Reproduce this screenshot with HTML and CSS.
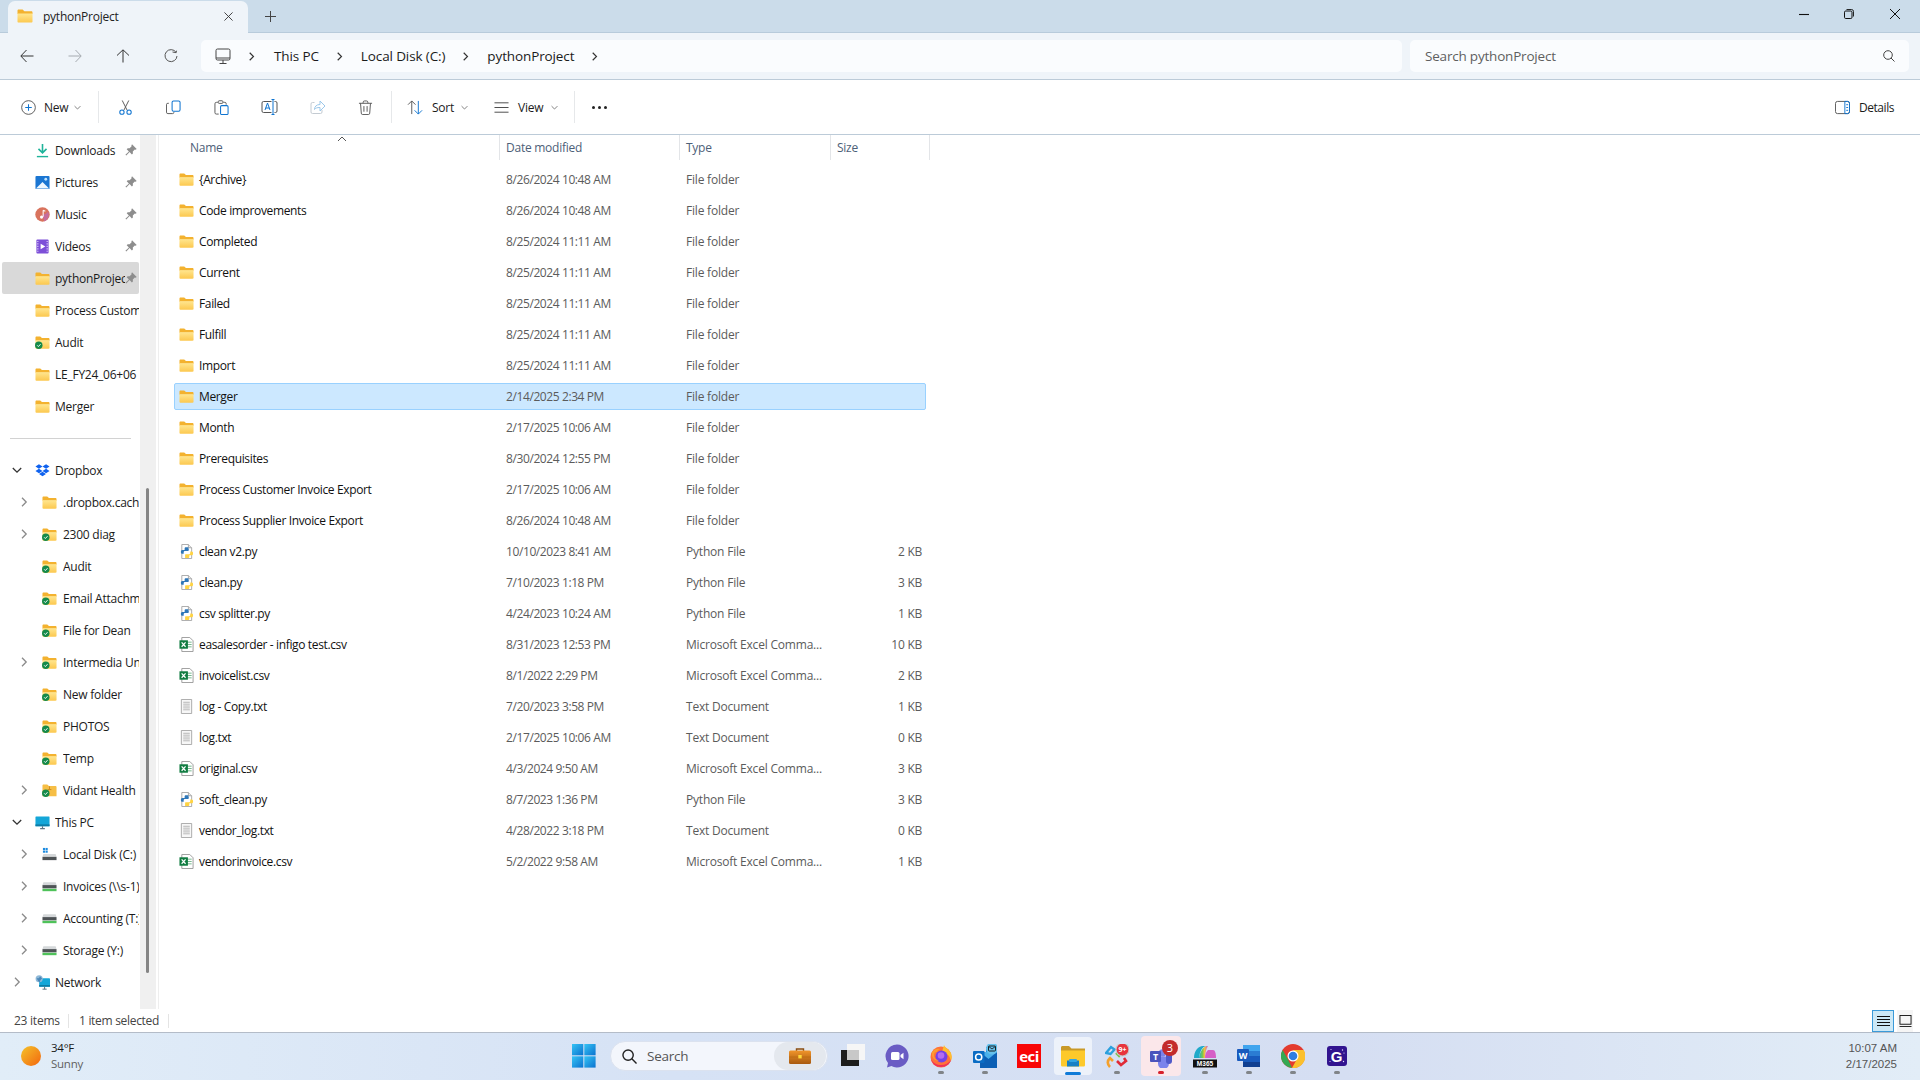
FILE: index.html
```html
<!DOCTYPE html>
<html lang="en">
<head>
<meta charset="utf-8">
<title>pythonProject - File Explorer</title>
<link rel="stylesheet" href="styles.css">
</head>
<body>
<svg class="defs" aria-hidden="true">
  <defs>
    <linearGradient id="fg" x1="0" y1="0" x2="0" y2="1"><stop offset="0" stop-color="#ffe68f"/><stop offset="1" stop-color="#fcc84f"/></linearGradient>
    <linearGradient id="winlogo" x1="0" y1="0" x2="1" y2="1"><stop offset="0" stop-color="#35c4f5"/><stop offset="1" stop-color="#0b72cf"/></linearGradient>
    <linearGradient id="bag" x1="0" y1="0" x2="0" y2="1"><stop offset="0" stop-color="#f0942a"/><stop offset="1" stop-color="#a85a10"/></linearGradient>
    <linearGradient id="sun" x1="0" y1="0" x2="1" y2="1"><stop offset="0" stop-color="#f4c32a"/><stop offset="1" stop-color="#f3660e"/></linearGradient>
    <linearGradient id="copilot" x1="0" y1="0" x2="1" y2="0"><stop offset="0" stop-color="#22b0c8"/><stop offset=".4" stop-color="#7dc84c"/><stop offset=".6" stop-color="#f0c040"/><stop offset="1" stop-color="#d45ec8"/></linearGradient>

    <symbol id="folder" viewBox="0 0 16 14"><path d="M.5 1.600C.5 1 1 .5 1.600.5h4l1.800 1.800h7c.6 0 1.100.5 1.100 1.100V5H.5z" fill="#f3b22f"/><path d="M.5 4.600h15v8c0 .6-.5 1-1 1h-13c-.6 0-1-.4-1-1z" fill="url(#fg)"/></symbol>
    <symbol id="folder-ok" viewBox="0 0 16 14"><path d="M.5 1.600C.5 1 1 .5 1.600.5h4l1.800 1.800h7c.6 0 1.100.5 1.100 1.100V5H.5z" fill="#f3b22f"/><path d="M.5 4.600h15v8c0 .6-.5 1-1 1h-13c-.6 0-1-.4-1-1z" fill="url(#fg)"/><circle cx="4" cy="10" r="4" fill="#158a4a"/><path d="M2.300 10l1.300 1.300 2.300-2.500" fill="none" stroke="#fff" stroke-width="1"/></symbol>
    <symbol id="folder-vid" viewBox="0 0 16 14"><path d="M.5 1.600C.5 1 1 .5 1.600.5h4l1.800 1.800h7c.6 0 1.100.5 1.100 1.100V13H.5z" fill="#f6be45"/><path d="M6 6h4M8 2.500v3" stroke="#c98a1c" stroke-width="1"/><circle cx="4" cy="10" r="4" fill="#158a4a"/><path d="M2.300 10l1.300 1.300 2.300-2.500" fill="none" stroke="#fff" stroke-width="1"/></symbol>
    <symbol id="chev-r" viewBox="0 0 10 10"><path d="M3 .8l4.200 4.200L3 9.200" fill="none" stroke="currentColor" stroke-width="1.300"/></symbol>
    <symbol id="chev-d" viewBox="0 0 10 10"><path d="M.8 3l4.200 4.200L9.200 3" fill="none" stroke="currentColor" stroke-width="1.300"/></symbol>
    <symbol id="pin" viewBox="0 0 12 12"><path d="M7 .3l4.700 4.700-1.100.7-.8-.2-2 2 .1 2-1 1-2.300-2.400L1.300 11.600.4 10.700l3.500-3.300L1.700 5.200l1-1 1.900.1 2-2-.2-.8z" fill="#8d8d8d"/></symbol>
    <symbol id="download" viewBox="0 0 16 16"><path d="M8 1v9M3.700 6.200L8 10.500l4.300-4.300" fill="none" stroke="#1fb39a" stroke-width="1.700"/><path d="M2 14.500h12" stroke="#1fb39a" stroke-width="1.500"/></symbol>
    <symbol id="pictures" viewBox="0 0 16 16"><rect x=".5" y="1" width="15" height="14" rx="1" fill="#1b76d2"/><path d="M1 14.500L8 7.500l7 7z" fill="#eef7ff"/><circle cx="11.500" cy="4.500" r="1.500" fill="#bfe3ff"/></symbol>
    <symbol id="music" viewBox="0 0 16 16"><circle cx="8" cy="8" r="7.700" fill="#d9735d"/><path d="M8 8a7.700 7.700 0 0 0 6-3 7.700 7.700 0 0 1-4 10.400z" fill="#c56d9d"/><path d="M8.700 3.500v7M8.700 3.500l2.300 1" stroke="#fff" stroke-width="1.100" fill="none"/><circle cx="7" cy="10.700" r="1.700" fill="#fff"/></symbol>
    <symbol id="videos" viewBox="0 0 16 16"><rect x="1.500" y=".5" width="13" height="15" rx="1" fill="#7d4fd8"/><path d="M6 5l5 3-5 3z" fill="#fff"/><path d="M3 2v12M13 2v12" stroke="#d7c8f7" stroke-width="1.300" stroke-dasharray="1.300 1.300"/></symbol>
    <symbol id="dropbox" viewBox="0 0 16 16"><path d="M4.200 1.200L8 3.600 4.200 6 .5 3.600zM11.800 1.200L15.500 3.600 11.800 6 8 3.600zM4.200 6L8 8.400l-3.800 2.400L.5 8.400zM11.800 6l3.700 2.400-3.700 2.400L8 8.400zM4.300 11.600L8 9.200l3.700 2.400L8 14.200z" fill="#0f62ef"/></symbol>
    <symbol id="pc" viewBox="0 0 16 16"><rect x=".5" y="1.500" width="15" height="10.500" rx=".6" fill="#14a6d8"/><path d="M.5 10h15v2H.5z" fill="#0d7ca6"/><path d="M5.500 14.500h5M8 12v2.500" stroke="#5f7482" stroke-width="1.200"/></symbol>
    <symbol id="cdrive" viewBox="0 0 16 16"><rect x="1" y="1" width="2.300" height="2.300" fill="#1d8be0"/><rect x="3.800" y="1" width="2.300" height="2.300" fill="#1d8be0"/><rect x="1" y="3.800" width="2.300" height="2.300" fill="#1d8be0"/><rect x="3.800" y="3.800" width="2.300" height="2.300" fill="#1d8be0"/><path d="M1.500 7.500h13l1 3H.5z" fill="#d5d8da"/><rect x=".5" y="10.500" width="15" height="3.500" fill="#4e5356"/></symbol>
    <symbol id="netdrive" viewBox="0 0 16 16"><path d="M1.500 3.500h13l1 3H.5z" fill="#d5d8da"/><rect x=".5" y="6.500" width="15" height="3.500" fill="#4e5356"/><rect x=".5" y="10.500" width="15" height="2.500" fill="#4fc25a"/></symbol>
    <symbol id="network" viewBox="0 0 18 18"><rect x="5" y="4" width="13" height="10" rx=".5" fill="#14a6d8"/><path d="M5 12h13v2H5z" fill="#0d7ca6"/><path d="M9 17h5M11.500 14v3" stroke="#5f7482" stroke-width="1.200"/><circle cx="5" cy="4.500" r="4.300" fill="#8fb9d8"/><path d="M2 3.500c2 1 3 .5 4-2 1 1 2 2 2.500 3-1.500.5-2.500 2-2.500 4-2-.5-3-2.500-4-5z" fill="#4b87b8"/></symbol>
    <symbol id="py" viewBox="0 0 16 16"><path d="M3 .5h7l3.500 3.500v11.500H3z" fill="#fff" stroke="#a8a8a8"/><path d="M10 .5V4h3.500" fill="#e8e8e8" stroke="#a8a8a8"/><path d="M10 3.500H7.500C6.500 3.500 6 4 6 5v1.500H3.500C2.500 6.500 2 7.300 2 8.500S2.500 10.500 3.500 10.500H5V9c0-1 .7-1.500 1.500-1.500H9.500c.7 0 1-.5 1-1z" fill="#2f77b8"/><path d="M6.500 15h3c1 0 1.500-.5 1.500-1.500V12h2.500c1 0 1.500-.8 1.500-2s-.5-2-1.500-2H12v1.500c0 1-.7 1.500-1.500 1.500h-3c-.7 0-1 .5-1 1z" fill="#ffd342"/></symbol>
    <symbol id="xl" viewBox="0 0 16 16"><path d="M3 .5h8.500l3.500 3.500v11.500H3z" fill="#fff" stroke="#9a9a9a"/><path d="M8.500 5.500h5M8.500 8h5M8.500 10.500h5" stroke="#6fb58a"/><rect x=".5" y="3.500" width="9" height="9" fill="#107c41"/><path d="M2.800 5.700l4.200 4.700M7 5.700l-4.200 4.700" stroke="#fff" stroke-width="1.300"/></symbol>
    <symbol id="txt" viewBox="0 0 16 16"><path d="M2.500.5h11v15h-11z" fill="#f7f7f7" stroke="#a8a8a8"/><path d="M4.500 3.500h7M4.500 5.500h7M4.500 7.500h7M4.500 9.500h7M4.500 11.500h7" stroke="#b4b4b4"/></symbol>

    <symbol id="t-new" viewBox="0 0 16 16"><circle cx="8" cy="8" r="7.300" fill="none" stroke="#555" stroke-width="1"/><path d="M8 4.500v7M4.500 8h7" stroke="#0f74d0" stroke-width="1.100"/></symbol>
    <symbol id="t-cut" viewBox="0 0 16 16"><path d="M4.500 .5l5.200 10.300M11.500 .5L6.300 10.800" stroke="#555" stroke-width="1" fill="none"/><circle cx="4.200" cy="13" r="2.300" fill="none" stroke="#0f74d0" stroke-width="1.100"/><circle cx="11.800" cy="13" r="2.300" fill="none" stroke="#0f74d0" stroke-width="1.100"/></symbol>
    <symbol id="t-copy" viewBox="0 0 16 16"><path d="M3 3.500H2a1.500 1.500 0 0 0-1.500 1.500v8A1.500 1.500 0 0 0 2 14.500h5A1.500 1.500 0 0 0 8.500 13" fill="none" stroke="#555"/><rect x="6.500" y="1" width="8.500" height="11" rx="1.500" fill="none" stroke="#0f74d0" stroke-width="1.100"/></symbol>
    <symbol id="t-paste" viewBox="0 0 16 16"><path d="M4 2.500H2.500A1.500 1.500 0 0 0 1 4v9.500A1.500 1.500 0 0 0 2.500 15H5M10 2.500h1.500A1.500 1.500 0 0 1 13 4v1" fill="none" stroke="#555"/><rect x="4.500" y=".8" width="5" height="2.800" rx="1" fill="none" stroke="#555"/><rect x="7" y="6" width="8" height="9.500" rx="1.200" fill="none" stroke="#0f74d0" stroke-width="1.100"/></symbol>
    <symbol id="t-rename" viewBox="0 0 16 16"><path d="M10 2.500H2A1.500 1.500 0 0 0 .5 4v8A1.500 1.500 0 0 0 2 13.500h8M13 2.500h1A1.500 1.500 0 0 1 15.500 4v8a1.500 1.500 0 0 1-1.500 1.500h-1" fill="none" stroke="#555"/><path d="M10 .5h3M10 15.500h3M11.500 .5v15" stroke="#0f74d0" stroke-width="1"/><path d="M3.500 11l2.500-7 2.500 7M4.300 9h3.400" fill="none" stroke="#0f74d0" stroke-width="1"/></symbol>
    <symbol id="t-share" viewBox="0 0 16 16"><path d="M5 3.500H3A1.500 1.500 0 0 0 1.500 5v8A1.500 1.500 0 0 0 3 14.500h8A1.500 1.500 0 0 0 12.500 13v-2" fill="none" stroke="#c4cbd2"/><path d="M5 10.500c0-3 2-5 5.500-5V2l5 5-5 5V8.500c-3 0-4.500.5-5.500 2z" fill="none" stroke="#9cc8ea"/></symbol>
    <symbol id="t-del" viewBox="0 0 16 16"><path d="M1 3.500h14M5.500 3.500V2.500a1.500 1.500 0 0 1 1.500-1.500h2a1.500 1.500 0 0 1 1.500 1.500v1M2.700 3.500l.8 10.500a1.500 1.500 0 0 0 1.500 1.500h6a1.500 1.500 0 0 0 1.500-1.500l.8-10.500M6.300 6.500v6M9.700 6.500v6" fill="none" stroke="#555" stroke-width="1"/></symbol>
    <symbol id="t-sort" viewBox="0 0 18 16"><path d="M5 15V1M1 5l4-4 4 4" fill="none" stroke="#555"/><path d="M12 1v14M8 11l4 4 4-4" fill="none" stroke="#0f74d0"/></symbol>
    <symbol id="t-view" viewBox="0 0 16 16"><path d="M.5 3h15M.5 8h15M.5 13h15" stroke="#444" stroke-width="1"/></symbol>
    <symbol id="t-details" viewBox="0 0 16 14"><rect x=".5" y=".5" width="15" height="13" rx="2.200" fill="none" stroke="#555"/><path d="M10.500.5h3a2 2 0 0 1 2 2v9a2 2 0 0 1-2 2h-3z" fill="none" stroke="#0f74d0"/><path d="M12 4h2M12 7h2M12 10h2" stroke="#0f74d0"/></symbol>
  </defs>
</svg>

<header class="titlebar">
  <div class="tab">
    <svg class="tab-icon"><use href="#folder"/></svg>
    <span class="tab-title">pythonProject</span>
    <svg class="tab-close" viewBox="0 0 10 10"><path d="M.5.500l9 9M9.500.500l-9 9" stroke="#333" stroke-width="1"/></svg>
  </div>
  <svg class="tab-plus" viewBox="0 0 11 11"><path d="M5.500 0v11M0 5.500h11" stroke="#444" stroke-width="1"/></svg>
  <div class="winctl">
    <svg class="wc wc-min" viewBox="0 0 10 10"><path d="M0 5.500h10" stroke="#111" stroke-width="1.100"/></svg>
    <svg class="wc wc-max" viewBox="0 0 10 10"><rect x=".5" y="2" width="7.500" height="7.500" rx="1.200" fill="none" stroke="#111"/><path d="M2.500.5h5A2 2 0 0 1 9.500 2.500v5" fill="none" stroke="#111" stroke-width=".9"/></svg>
    <svg class="wc wc-close" viewBox="0 0 10 10"><path d="M0 0l10 10M10 0L0 10" stroke="#111" stroke-width="1"/></svg>
  </div>
</header>

<nav class="navbar">
  <div class="navbtn"><svg class="nav-ic" viewBox="0 0 14 14"><path d="M13.500 7H1M6.500 1L.8 7l5.700 6" fill="none" stroke="#333"/></svg></div>
  <div class="navbtn"><svg class="nav-ic" viewBox="0 0 14 14"><path d="M.5 7H13M7.500 1l5.700 6-5.700 6" fill="none" stroke="#a5aab0"/></svg></div>
  <div class="navbtn"><svg class="nav-ic" viewBox="0 0 14 14"><path d="M7 13.500V1M1 6.500L7 .8l6 5.700" fill="none" stroke="#333"/></svg></div>
  <div class="navbtn"><svg class="nav-ic" viewBox="0 0 14 14"><path d="M12 3.300A6 6 0 1 0 13 7" fill="none" stroke="#555"/><path d="M8.500 1.500l3.700.7.300-2" transform="translate(0 1.500)" fill="none" stroke="#555"/></svg></div>
  <div class="addr">
    <svg class="addr-pc" viewBox="0 0 16 17"><rect x="1" y="1" width="14" height="11" rx="1.500" fill="none" stroke="#444"/><path d="M1 10h14" stroke="#444"/><path d="M8 12v3M4.500 15.500h7" stroke="#444"/></svg>
    <svg class="crumb-chev first"><use href="#chev-r"/></svg>
    <span>This PC</span>
    <svg class="crumb-chev"><use href="#chev-r"/></svg>
    <span>Local Disk (C:)</span>
    <svg class="crumb-chev"><use href="#chev-r"/></svg>
    <span>pythonProject</span>
    <svg class="crumb-chev"><use href="#chev-r"/></svg>
  </div>
  <div class="searchbox">
    <span>Search pythonProject</span>
    <svg class="search-ic" viewBox="0 0 12 12"><circle cx="5" cy="5" r="4.300" fill="none" stroke="#444"/><path d="M8 8l3.500 3.500" stroke="#444"/></svg>
  </div>
</nav>

<section class="toolbar">
  <div class="tb-lab tb-new"><svg class="t15"><use href="#t-new"/></svg><span>New</span><svg class="tb-drop"><use href="#chev-d"/></svg></div>
  <i class="tb-sep"></i>
  <div class="tb-icons">
    <div class="tb-ic"><svg class="t15"><use href="#t-cut"/></svg></div>
    <div class="tb-ic"><svg class="t15"><use href="#t-copy"/></svg></div>
    <div class="tb-ic"><svg class="t15"><use href="#t-paste"/></svg></div>
    <div class="tb-ic"><svg class="t16"><use href="#t-rename"/></svg></div>
    <div class="tb-ic"><svg class="t16"><use href="#t-share"/></svg></div>
    <div class="tb-ic"><svg class="t15"><use href="#t-del"/></svg></div>
  </div>
  <i class="tb-sep after-icons"></i>
  <div class="tb-lab tb-sort"><svg class="t17"><use href="#t-sort"/></svg><span>Sort</span><svg class="tb-drop"><use href="#chev-d"/></svg></div>
  <div class="tb-lab tb-view"><svg class="t15"><use href="#t-view"/></svg><span>View</span><svg class="tb-drop"><use href="#chev-d"/></svg></div>
  <i class="tb-sep"></i>
  <div class="tb-ic tb-more"><span class="dot"></span><span class="dot"></span><span class="dot"></span></div>
  <div class="tb-details"><svg class="t15"><use href="#t-details"/></svg><span>Details</span></div>
</section>

<div class="content">
  <aside class="sidebar">
    <div class="nav-row"><span class="slot"></span><svg class="ic"><use href="#download"/></svg><span class="lbl">Downloads</span><svg class="pin"><use href="#pin"/></svg></div>
    <div class="nav-row"><span class="slot"></span><svg class="ic"><use href="#pictures"/></svg><span class="lbl">Pictures</span><svg class="pin"><use href="#pin"/></svg></div>
    <div class="nav-row"><span class="slot"></span><svg class="ic"><use href="#music"/></svg><span class="lbl">Music</span><svg class="pin"><use href="#pin"/></svg></div>
    <div class="nav-row"><span class="slot"></span><svg class="ic"><use href="#videos"/></svg><span class="lbl">Videos</span><svg class="pin"><use href="#pin"/></svg></div>
    <div class="nav-row active"><span class="slot"></span><svg class="ic"><use href="#folder"/></svg><span class="lbl">pythonProject</span><svg class="pin"><use href="#pin"/></svg></div>
    <div class="nav-row"><span class="slot"></span><svg class="ic"><use href="#folder"/></svg><span class="lbl">Process Customer Invoice Export</span></div>
    <div class="nav-row"><span class="slot"></span><svg class="ic"><use href="#folder-ok"/></svg><span class="lbl">Audit</span></div>
    <div class="nav-row"><span class="slot"></span><svg class="ic"><use href="#folder"/></svg><span class="lbl">LE_FY24_06+06</span></div>
    <div class="nav-row"><span class="slot"></span><svg class="ic"><use href="#folder"/></svg><span class="lbl">Merger</span></div>
    <hr class="nav-div">
    <div class="nav-row"><span class="slot"><svg class="tw open"><use href="#chev-d"/></svg></span><svg class="ic"><use href="#dropbox"/></svg><span class="lbl">Dropbox</span></div>
    <div class="nav-row sub"><span class="slot"><svg class="tw"><use href="#chev-r"/></svg></span><svg class="ic"><use href="#folder"/></svg><span class="lbl">.dropbox.cache</span></div>
    <div class="nav-row sub"><span class="slot"><svg class="tw"><use href="#chev-r"/></svg></span><svg class="ic"><use href="#folder-ok"/></svg><span class="lbl">2300 diag</span></div>
    <div class="nav-row sub"><span class="slot"></span><svg class="ic"><use href="#folder-ok"/></svg><span class="lbl">Audit</span></div>
    <div class="nav-row sub"><span class="slot"></span><svg class="ic"><use href="#folder-ok"/></svg><span class="lbl">Email Attachments</span></div>
    <div class="nav-row sub"><span class="slot"></span><svg class="ic"><use href="#folder-ok"/></svg><span class="lbl">File for Dean</span></div>
    <div class="nav-row sub"><span class="slot"><svg class="tw"><use href="#chev-r"/></svg></span><svg class="ic"><use href="#folder-ok"/></svg><span class="lbl">Intermedia Unite</span></div>
    <div class="nav-row sub"><span class="slot"></span><svg class="ic"><use href="#folder-ok"/></svg><span class="lbl">New folder</span></div>
    <div class="nav-row sub"><span class="slot"></span><svg class="ic"><use href="#folder-ok"/></svg><span class="lbl">PHOTOS</span></div>
    <div class="nav-row sub"><span class="slot"></span><svg class="ic"><use href="#folder-ok"/></svg><span class="lbl">Temp</span></div>
    <div class="nav-row sub"><span class="slot"><svg class="tw"><use href="#chev-r"/></svg></span><svg class="ic"><use href="#folder-vid"/></svg><span class="lbl">Vidant Health</span></div>
    <div class="nav-row"><span class="slot"><svg class="tw open"><use href="#chev-d"/></svg></span><svg class="ic"><use href="#pc"/></svg><span class="lbl">This PC</span></div>
    <div class="nav-row sub"><span class="slot"><svg class="tw"><use href="#chev-r"/></svg></span><svg class="ic"><use href="#cdrive"/></svg><span class="lbl">Local Disk (C:)</span></div>
    <div class="nav-row sub"><span class="slot"><svg class="tw"><use href="#chev-r"/></svg></span><svg class="ic"><use href="#netdrive"/></svg><span class="lbl">Invoices (\\s-1)</span></div>
    <div class="nav-row sub"><span class="slot"><svg class="tw"><use href="#chev-r"/></svg></span><svg class="ic"><use href="#netdrive"/></svg><span class="lbl">Accounting (T:)</span></div>
    <div class="nav-row sub"><span class="slot"><svg class="tw"><use href="#chev-r"/></svg></span><svg class="ic"><use href="#netdrive"/></svg><span class="lbl">Storage (Y:)</span></div>
    <div class="nav-row"><span class="slot"><svg class="tw"><use href="#chev-r"/></svg></span><svg class="ic"><use href="#network"/></svg><span class="lbl">Network</span></div>
  </aside>
  <div class="scrolltrack"><div class="thumb"></div></div>

  <main class="files">
    <div class="cols head">
      <div class="hcell hname">Name<svg class="sortmark" viewBox="0 0 10 6"><path d="M1 5l4-4 4 4" fill="none" stroke="#555"/></svg></div>
      <div class="hcell">Date modified</div>
      <div class="hcell">Type</div>
      <div class="hcell">Size</div>
    </div>
    <div class="cols row"><div class="name"><svg class="fi"><use href="#folder"/></svg>{Archive}</div><div>8/26/2024 10:48 AM</div><div class="type">File folder</div><div class="size"></div></div>
    <div class="cols row"><div class="name"><svg class="fi"><use href="#folder"/></svg>Code improvements</div><div>8/26/2024 10:48 AM</div><div class="type">File folder</div><div class="size"></div></div>
    <div class="cols row"><div class="name"><svg class="fi"><use href="#folder"/></svg>Completed</div><div>8/25/2024 11:11 AM</div><div class="type">File folder</div><div class="size"></div></div>
    <div class="cols row"><div class="name"><svg class="fi"><use href="#folder"/></svg>Current</div><div>8/25/2024 11:11 AM</div><div class="type">File folder</div><div class="size"></div></div>
    <div class="cols row"><div class="name"><svg class="fi"><use href="#folder"/></svg>Failed</div><div>8/25/2024 11:11 AM</div><div class="type">File folder</div><div class="size"></div></div>
    <div class="cols row"><div class="name"><svg class="fi"><use href="#folder"/></svg>Fulfill</div><div>8/25/2024 11:11 AM</div><div class="type">File folder</div><div class="size"></div></div>
    <div class="cols row"><div class="name"><svg class="fi"><use href="#folder"/></svg>Import</div><div>8/25/2024 11:11 AM</div><div class="type">File folder</div><div class="size"></div></div>
    <div class="cols row selected"><div class="name"><svg class="fi"><use href="#folder"/></svg>Merger</div><div>2/14/2025 2:34 PM</div><div class="type">File folder</div><div class="size"></div></div>
    <div class="cols row"><div class="name"><svg class="fi"><use href="#folder"/></svg>Month</div><div>2/17/2025 10:06 AM</div><div class="type">File folder</div><div class="size"></div></div>
    <div class="cols row"><div class="name"><svg class="fi"><use href="#folder"/></svg>Prerequisites</div><div>8/30/2024 12:55 PM</div><div class="type">File folder</div><div class="size"></div></div>
    <div class="cols row"><div class="name"><svg class="fi"><use href="#folder"/></svg>Process Customer Invoice Export</div><div>2/17/2025 10:06 AM</div><div class="type">File folder</div><div class="size"></div></div>
    <div class="cols row"><div class="name"><svg class="fi"><use href="#folder"/></svg>Process Supplier Invoice Export</div><div>8/26/2024 10:48 AM</div><div class="type">File folder</div><div class="size"></div></div>
    <div class="cols row"><div class="name"><svg class="fi"><use href="#py"/></svg>clean v2.py</div><div>10/10/2023 8:41 AM</div><div class="type">Python File</div><div class="size">2 KB</div></div>
    <div class="cols row"><div class="name"><svg class="fi"><use href="#py"/></svg>clean.py</div><div>7/10/2023 1:18 PM</div><div class="type">Python File</div><div class="size">3 KB</div></div>
    <div class="cols row"><div class="name"><svg class="fi"><use href="#py"/></svg>csv splitter.py</div><div>4/24/2023 10:24 AM</div><div class="type">Python File</div><div class="size">1 KB</div></div>
    <div class="cols row"><div class="name"><svg class="fi"><use href="#xl"/></svg>easalesorder - infigo test.csv</div><div>8/31/2023 12:53 PM</div><div class="type">Microsoft Excel Comma...</div><div class="size">10 KB</div></div>
    <div class="cols row"><div class="name"><svg class="fi"><use href="#xl"/></svg>invoicelist.csv</div><div>8/1/2022 2:29 PM</div><div class="type">Microsoft Excel Comma...</div><div class="size">2 KB</div></div>
    <div class="cols row"><div class="name"><svg class="fi"><use href="#txt"/></svg>log - Copy.txt</div><div>7/20/2023 3:58 PM</div><div class="type">Text Document</div><div class="size">1 KB</div></div>
    <div class="cols row"><div class="name"><svg class="fi"><use href="#txt"/></svg>log.txt</div><div>2/17/2025 10:06 AM</div><div class="type">Text Document</div><div class="size">0 KB</div></div>
    <div class="cols row"><div class="name"><svg class="fi"><use href="#xl"/></svg>original.csv</div><div>4/3/2024 9:50 AM</div><div class="type">Microsoft Excel Comma...</div><div class="size">3 KB</div></div>
    <div class="cols row"><div class="name"><svg class="fi"><use href="#py"/></svg>soft_clean.py</div><div>8/7/2023 1:36 PM</div><div class="type">Python File</div><div class="size">3 KB</div></div>
    <div class="cols row"><div class="name"><svg class="fi"><use href="#txt"/></svg>vendor_log.txt</div><div>4/28/2022 3:18 PM</div><div class="type">Text Document</div><div class="size">0 KB</div></div>
    <div class="cols row"><div class="name"><svg class="fi"><use href="#xl"/></svg>vendorinvoice.csv</div><div>5/2/2022 9:58 AM</div><div class="type">Microsoft Excel Comma...</div><div class="size">1 KB</div></div>
  </main>
</div>

<div class="statusbar">
  <span class="st-count">23 items</span>
  <i class="st-sep"></i>
  <span class="st-sel">1 item selected</span>
  <i class="st-sep"></i>
  <div class="viewmodes">
    <div class="vm active"><svg class="vm-ic" viewBox="0 0 13 11"><path d="M0 1h13M0 4h13M0 7h13M0 10h13" stroke="#111" stroke-width="1"/></svg></div>
    <div class="vm vm-large"><svg class="vm-ic" viewBox="0 0 13 13"><rect x=".5" y=".5" width="12" height="9.500" fill="none" stroke="#111"/><path d="M0 12.500h13" stroke="#111"/></svg></div>
  </div>
</div>

<footer class="taskbar">
  <div class="weather">
    <svg class="sun" viewBox="0 0 20 20"><circle cx="10" cy="10" r="10" fill="url(#sun)"/></svg>
    <div class="w-text"><span class="w-temp">34°F</span><span class="w-cond">Sunny</span></div>
  </div>
  <div class="slot44">
    <svg class="app" viewBox="0 0 24 24"><rect x="0" y="0" width="11.300" height="11.300" fill="url(#winlogo)"/><rect x="12.300" y="0" width="11.300" height="11.300" fill="url(#winlogo)"/><rect x="0" y="12.300" width="11.300" height="11.300" fill="url(#winlogo)"/><rect x="12.300" y="12.300" width="11.300" height="11.300" fill="url(#winlogo)"/></svg>
  </div>
  <div class="tb-search">
    <svg class="ts-ic" viewBox="0 0 16 16"><circle cx="6.500" cy="6.500" r="5.500" fill="none" stroke="#222" stroke-width="1.500"/><path d="M10.500 10.500l5 5" stroke="#222" stroke-width="1.500"/></svg>
    <span class="ts-text">Search</span>
    <div class="ts-bag">
      <svg class="ts-bag-ic" viewBox="0 0 22 16"><path d="M7.500 3V1h7v2" fill="none" stroke="#8a4d12" stroke-width="1.400"/><rect x="0" y="2.500" width="22" height="13.500" rx="1.500" fill="url(#bag)"/><path d="M0 9h22" stroke="#b8680f" stroke-width=".7"/><rect x="9.300" y="7" width="3.400" height="3.400" fill="#ffd83a"/></svg>
    </div>
  </div>
  <div class="slot44">
    <svg class="app" viewBox="0 0 24 24"><rect x="6" y="0" width="18" height="16" fill="#f6f6f6"/><rect x="0" y="6" width="18" height="16" fill="#1d1d1d"/><rect x="6" y="6" width="12" height="10" fill="#c8c8c8"/></svg>
  </div>
  <div class="slot44">
    <svg class="app" viewBox="0 0 24 24"><path d="M12 .5a11.500 11.500 0 1 1-5.600 21.500L2 23.500l1-4.500A11.500 11.500 0 0 1 12 .5z" fill="#6a5cc4"/><rect x="6" y="8" width="8.500" height="8" rx="1.500" fill="#fff"/><path d="M15.500 11l3-2.200v6.400l-3-2.200z" fill="#fff"/></svg>
  </div>
  <div class="slot44">
    <svg class="app" viewBox="0 0 24 24"><circle cx="12" cy="13" r="10.500" fill="#ff7139"/><path d="M15 1c1 3 5 4 7 8 1 3 1 6 0 8-1-5-4-8-9-9z" fill="#ffbd2e"/><circle cx="12.500" cy="12.500" r="6" fill="#7542e5"/><circle cx="12" cy="11.500" r="3.300" fill="#b36cf0"/><path d="M3 8c2-3 5-4 8-3-2 1-3 2-3 3-2 0-3 1-3 3 0 3 2 5 5 5.500-4 1-8-3-7-8.500z" fill="#ff9a2e"/><path d="M2 15c1 5 5 8 10 8 5 0 9-3 10-7-2 3-6 5-10 5-4 0-8-2-10-6z" fill="#f0305a"/></svg>
    <i class="rundot"></i>
  </div>
  <div class="slot44">
    <svg class="app" viewBox="0 0 24 24"><path d="M7 8h17v16H7z" fill="#0b5fb5"/><path d="M7 8l8.500 7L24 8z" fill="#4bb0ea"/><path d="M13 3h9v5h-9z" fill="#1b86d6"/><rect x="0" y="7" width="11.500" height="12" rx="1" fill="#0a6cc4"/><circle cx="5.700" cy="13" r="3.100" fill="none" stroke="#fff" stroke-width="1.500"/><circle cx="19" cy="4.500" r="6" fill="#65c1ec"/><rect x="15.500" y="2" width="7" height="5" rx=".8" fill="#65c1ec" stroke="#111" stroke-width=".9"/><path d="M15.700 2.500L19 5l3.300-2.500" fill="none" stroke="#111" stroke-width=".8"/></svg>
    <i class="rundot"></i>
  </div>
  <div class="slot44">
    <div class="eci">eci</div>
  </div>
  <div class="slot44 current">
    <svg class="app" viewBox="0 0 24 24"><path d="M0 3.500C0 2.500 .7 2 1.500 2h6.500l2.500 2.500H24V8H0z" fill="#c99a28"/><path d="M0 6.500h24V21c0 1-.7 1.500-1.500 1.500h-21C.7 22.500 0 22 0 21z" fill="#fdc92b"/><path d="M6 16.500h12v6H6z" fill="#1880c4"/><rect x="8" y="15" width="8" height="3" rx="1" fill="#33a5e2"/></svg>
    <i class="rundot blue"></i>
  </div>
  <div class="slot44">
    <svg class="app" viewBox="0 0 24 24"><path d="M1 9l5-6 3.500 2.500L5.500 10z" fill="none" stroke="#2ba0dd" stroke-width="2.400"/><path d="M5 23c-3-3-3-6 0-9l3 3" fill="none" stroke="#f5a02a" stroke-width="2.600"/><path d="M12 17l4 4 5-4-2-3" fill="none" stroke="#e02a36" stroke-width="2.600"/><path d="M11 9l3 3 3-4" fill="none" stroke="#7ac24a" stroke-width="2.400"/><circle cx="17.500" cy="5.500" r="6.500" fill="#e8353d" stroke="#c8c8c8" stroke-width="1.200"/><text class="badge-txt" x="17.500" y="8">9+</text></svg>
    <i class="rundot"></i>
  </div>
  <div class="slot44 teams">
    <svg class="app" viewBox="0 0 24 24"><circle cx="13.500" cy="9" r="3.800" fill="#7b83eb"/><path d="M9 12.500h11v7a5 5 0 0 1-11 0z" fill="#7b83eb"/><path d="M17 10h6v7a3 3 0 0 1-6 0z" fill="#5059c9"/><rect x="1" y="7" width="11" height="11" rx="1" fill="#4b53bc"/><text class="teams-t" x="6.500" y="15.500">T</text></svg>
    <span class="teams-badge">3</span>
    <i class="rundot red"></i>
  </div>
  <div class="slot44">
    <svg class="app" viewBox="0 0 24 24"><path d="M1 14C1 7 5 2 10 2h3c-4 1-6 5-7 12z" fill="#1fa9c9"/><path d="M6 14c1-7 4-10 7-12h2c-2 3-3 8-3 12z" fill="url(#copilot)"/><path d="M12 14c0-4 1-6 3-8h5c2 0 3 3 3 8z" fill="#d65fc6"/><rect x="0" y="15.500" width="24" height="8" fill="#111"/><text class="m365" x="12" y="22">M365</text></svg>
    <i class="rundot"></i>
  </div>
  <div class="slot44">
    <svg class="app" viewBox="0 0 24 24"><path d="M6 1h17v22H6z" fill="#2b7cd3"/><path d="M6 1h17v6H6z" fill="#41a5ee"/><path d="M6 12h17v6H6z" fill="#185abd"/><path d="M6 18h17v5H6z" fill="#103f91"/><rect x="0" y="5" width="12" height="12" rx="1" fill="#185abd"/><text class="word-w" x="6" y="14.500">W</text></svg>
    <i class="rundot"></i>
  </div>
  <div class="slot44">
    <svg class="app" viewBox="0 0 24 24"><circle cx="12" cy="12" r="12" fill="#e33b2e"/><path d="M12 6h10.700A12 12 0 0 1 11 24l5.500-10z" fill="#fbc02d"/><path d="M1.600 6l5.200 9L11 24A12 12 0 0 1 1.600 6z" fill="#34a853"/><circle cx="12" cy="12" r="5.500" fill="#fff"/><circle cx="12" cy="12" r="4.300" fill="#2f7de1"/></svg>
    <i class="rundot"></i>
  </div>
  <div class="slot44">
    <svg class="app app-g" viewBox="0 0 20 20"><rect width="20" height="20" rx="3" fill="#32148f"/><text class="g-letter" x="9.500" y="15.500">G</text><circle cx="15.500" cy="4" r=".7" fill="#e9dcff"/><circle cx="17" cy="7" r=".6" fill="#e9dcff"/><circle cx="4" cy="3.500" r=".6" fill="#e9dcff"/><circle cx="3" cy="15.500" r=".6" fill="#e9dcff"/><circle cx="16.500" cy="15.500" r=".7" fill="#e9dcff"/></svg>
    <i class="rundot"></i>
  </div>
  <div class="clock"><span>10:07 AM</span><span>2/17/2025</span></div>
</footer>
</body>
</html>
```

FILE: styles.css
```css
* { box-sizing: border-box; }
html, body { margin: 0; padding: 0; }
body {
  width: 1920px;
  height: 1080px;
  overflow: hidden;
  display: flex;
  flex-direction: column;
  background: #fff;
  font-family: "Open Sans", "Noto Sans", "Liberation Sans", sans-serif;
  font-size: 12px;
  letter-spacing: -0.25px;
  color: #1b1b1b;
}
.defs { position: absolute; width: 0; height: 0; }
svg { display: block; flex: none; }

/* title bar */
.titlebar {
  height: 33px;
  display: flex;
  align-items: flex-end;
  background: #cbdcea;
  border-bottom: 1px solid #b8cbdb;
}
.tab {
  width: 240px;
  height: 32px;
  margin: 0 0 -1px 8px;
  padding: 0 15px 2px 9px;
  display: flex;
  align-items: center;
  background: #eff4f9;
  border-radius: 7px 7px 0 0;
}
.tab-icon { width: 16px; height: 14px; margin-right: 10px; }
.tab-title { flex: 1; color: #222; }
.tab-close { width: 9px; height: 9px; }
.tab-plus { width: 11px; height: 11px; margin: 0 0 10px 17px; }
.winctl { margin-left: auto; display: flex; align-self: stretch; align-items: center; padding-right: 20px; }
.wc { width: 10px; height: 10px; margin-top: -4px; }
.wc-max { margin-left: 35px; }
.wc-close { margin-left: 36px; }

/* nav bar */
.navbar {
  height: 47px;
  padding: 0 11px 0 3px;
  display: flex;
  align-items: center;
  background: #eff4f9;
  border-bottom: 1px solid #bccbd8;
}
.navbtn { width: 48px; display: flex; justify-content: center; }
.nav-ic { width: 14px; height: 14px; }
.addr {
  flex: 1;
  height: 32px;
  margin: 0 8px 0 6px;
  padding-left: 14px;
  display: flex;
  align-items: center;
  background: #fafcfe;
  border-radius: 5px;
  font-size: 13.5px;
  letter-spacing: -0.12px;
}
.addr-pc { width: 16px; height: 17px; }
.crumb-chev { width: 9px; height: 9px; margin: 0 17px 0 16px; color: #333; }
.crumb-chev.first { margin-right: 18px; }
.searchbox {
  width: 499px;
  height: 32px;
  padding: 0 14px 0 15px;
  display: flex;
  align-items: center;
  justify-content: space-between;
  background: #fafcfe;
  border-radius: 5px;
  font-size: 13.5px;
  letter-spacing: -0.2px;
  color: #5f5f5f;
}
.search-ic { width: 12px; height: 12px; }

/* command bar */
.toolbar {
  height: 55px;
  padding: 0 26px 0 21px;
  display: flex;
  align-items: center;
  background: #fff;
  border-bottom: 1px solid #bccbd8;
}
.t15 { width: 15px; height: 15px; }
.t16 { width: 17px; height: 16px; }
.t17 { width: 17px; height: 15px; }
.tb-lab { display: flex; align-items: center; }
.tb-drop { width: 7px; height: 7px; color: #777; margin-left: 7px; }
.tb-new { width: 77px; gap: 8px; }
.tb-new .tb-drop { margin-left: -2px; }
.tb-sep { width: 1px; height: 32px; background: #e6e8ea; flex: none; }
.tb-icons { display: flex; margin-left: 2px; }
.tb-ic { width: 48px; height: 32px; display: flex; align-items: center; justify-content: center; }
.after-icons { margin-left: 2px; }
.tb-sort { width: 87px; margin-left: 15px; gap: 8px; }
.tb-view { width: 80px; gap: 9px; }
.tb-sort .tb-drop, .tb-view .tb-drop { margin-left: -1px; }
.tb-more { gap: 3px; }
.dot { width: 3px; height: 3px; border-radius: 50%; background: #222; }
.tb-details { margin-left: auto; display: flex; align-items: center; gap: 9px; letter-spacing: -0.45px; }

/* content */
.content { flex: 1; min-height: 0; display: flex; }
.sidebar { width: 140px; height: calc(100% + 1px); margin-top: -1px; overflow: hidden; flex: none; }
.nav-row {
  width: 137px;
  height: 32px;
  margin-left: 2px;
  padding-left: 8px;
  display: flex;
  align-items: center;
  border-radius: 2px;
}
.nav-row.sub { padding-left: 15px; }
.nav-row.active { background: #d9d9d9; }
.slot { width: 25px; flex: none; padding-left: 2px; }
.tw { width: 10px; height: 10px; color: #8a8a8a; }
.tw.open { color: #333; }
.ic { width: 15px; height: 15px; margin-right: 5px; }
.sub .ic { margin-right: 6px; }
.lbl { flex: 1; min-width: 0; overflow: hidden; white-space: nowrap; }
.pin { width: 12px; height: 12px; margin: 0 2px 0 0; }
.nav-div { width: 121px; height: 1px; margin: 16px 0 15px 10px; border: 0; background: #d2d2d2; }
.scrolltrack {
  width: 16px;
  padding: 353px 0 0 6px;
  flex: none;
  background: #f0f0f0;
}
.thumb { width: 3px; height: 485px; border-radius: 2px; background: #858585; }
.files { flex: 1; margin-left: 2px; padding-left: 15px; border-left: 1px solid #eeeeee; }
.cols {
  display: grid;
  align-items: center;
}
.head {
  grid-template-columns: 326px 180px 151px 99px;
  width: 756px;
  height: 25px;
  margin-bottom: 6px;
  color: #4d6078;
}
.hcell { position: relative; height: 100%; display: flex; align-items: center; padding-left: 6px; border-right: 1px solid #e3e5e8; }
.hname { padding-left: 16px; }
.sortmark { position: absolute; top: 1px; left: 163px; width: 10px; height: 6px; }
.row {
  grid-template-columns: 326px 180px 149px 97px;
  width: 752px;
  height: 27px;
  margin-bottom: 4px;
  color: #5b5b5b;
  border: 1px solid transparent;
  border-radius: 2px;
  letter-spacing: -0.4px;
}
.row > div { padding-left: 6px; white-space: nowrap; }
.row > div + div { margin-left: -1px; }
.row .name { display: flex; align-items: center; padding-left: 4px; color: #111; letter-spacing: -0.36px; }
.row .type { letter-spacing: -0.2px; }
.fi { width: 15px; height: 15px; margin-right: 5px; }
.row .size { text-align: right; padding: 0 5px 0 0; letter-spacing: -0.25px; }
.row.selected { background: #cce8ff; border-color: #99d1ff; }

/* status bar */
.statusbar {
  height: 23px;
  padding-left: 14px;
  display: flex;
  align-items: center;
  color: #444;
  background: #fff;
}
.st-count { width: 54px; }
.st-sel { width: 89px; margin-left: 10px; letter-spacing: -0.3px; }
.st-sep { width: 1px; height: 14px; background: #e4e4e4; }
.viewmodes { margin-left: auto; display: flex; height: 100%; padding-right: 7px; gap: 3px; align-items: center; }
.vm { width: 22px; height: 22px; display: flex; align-items: center; justify-content: center; }
.vm.active { background: #cce8f6; border: 1px solid #3a9ad9; }
.vm.vm-large { width: 16px; background: #f5f5f5; }
.vm-ic { width: 13px; height: 12px; }

/* taskbar */
.taskbar {
  height: 48px;
  padding-bottom: 1px;
  display: flex;
  align-items: center;
  background: linear-gradient(90deg, #e1edf8 0%, #d6e2f5 35%, #d5def2 70%, #e2edf7 100%);
  border-top: 1px solid #b4bcc8;
}
.weather { width: 562px; padding-left: 21px; display: flex; align-items: center; gap: 10px; }
.sun { width: 20px; height: 20px; }
.w-text { display: flex; flex-direction: column; line-height: 16px; font-size: 11.5px; }
.w-cond { color: #5f5f5f; }
.slot44 {
  position: relative;
  width: 44px;
  height: 38px;
  flex: none;
  display: flex;
  align-items: center;
  justify-content: center;
}
.app { width: 24px; height: 24px; }
.app-g { width: 20px; height: 20px; }
.rundot {
  position: absolute;
  bottom: 1px;
  left: 19px;
  width: 6px;
  height: 3px;
  border-radius: 2px;
  background: #808488;
}
.rundot.blue { left: 14px; width: 16px; bottom: 0; background: #0f7bd8; }
.rundot.red { background: #d6202b; left: 19px; }
.current::before {
  content: "";
  position: absolute;
  left: 3px;
  right: 3px;
  top: 0;
  bottom: 0;
  z-index: 0;
  border-radius: 4px;
  background: #edf2fa;
}
.current .app, .teams .app { position: relative; }
.teams::before {
  content: "";
  position: absolute;
  left: 2px;
  right: 2px;
  top: -1px;
  bottom: -1px;
  border-radius: 4px;
  background: #fbe7ea;
}
.teams-badge {
  position: absolute;
  top: 3px;
  right: 5px;
  width: 16px;
  height: 16px;
  border-radius: 50%;
  background: #c42b2b;
  color: #fff;
  font-size: 11px;
  line-height: 16px;
  text-align: center;
  letter-spacing: 0;
}
.eci {
  width: 24px;
  height: 24px;
  overflow: hidden;
  background: #f80606;
  color: #fff;
  font: 700 15px/24px "Open Sans", sans-serif;
  letter-spacing: -0.5px;
  text-align: center;
}
.badge-txt { font: 700 7px "Open Sans", sans-serif; fill: #fff; text-anchor: middle; letter-spacing: 0; }
.teams-t { font: 700 9px "Open Sans", sans-serif; fill: #fff; text-anchor: middle; letter-spacing: 0; }
.word-w { font: 700 9px "Open Sans", sans-serif; fill: #fff; text-anchor: middle; letter-spacing: 0; }
.m365 { font: 700 6.500px "Liberation Sans", sans-serif; fill: #fff; text-anchor: middle; letter-spacing: 0; }
.g-letter { font: 700 15px "Liberation Sans", sans-serif; fill: #fff; text-anchor: middle; letter-spacing: 0; }
.tb-search {
  width: 218px;
  height: 30px;
  margin: 0 3px 0 4px;
  padding: 0 1px 0 11px;
  display: flex;
  align-items: center;
  background: #f3f6fc;
  border: 1px solid #dbe2ef;
  border-radius: 15px;
  font-size: 13.500px;
  color: #555;
}
.ts-ic { width: 15px; height: 15px; }
.ts-text { margin-left: 10px; }
.ts-bag {
  width: 52px;
  height: 28px;
  margin-left: auto;
  display: flex;
  align-items: center;
  justify-content: center;
  background: #e4e8ee;
  border-radius: 14px;
}
.ts-bag-ic { width: 22px; height: 16px; }
.clock {
  margin-left: auto;
  padding-right: 23px;
  display: flex;
  flex-direction: column;
  align-items: flex-end;
  line-height: 16px;
  color: #555;
  letter-spacing: 0;
  font-family: "Liberation Sans", sans-serif;
  font-size: 11.500px;
}
```
